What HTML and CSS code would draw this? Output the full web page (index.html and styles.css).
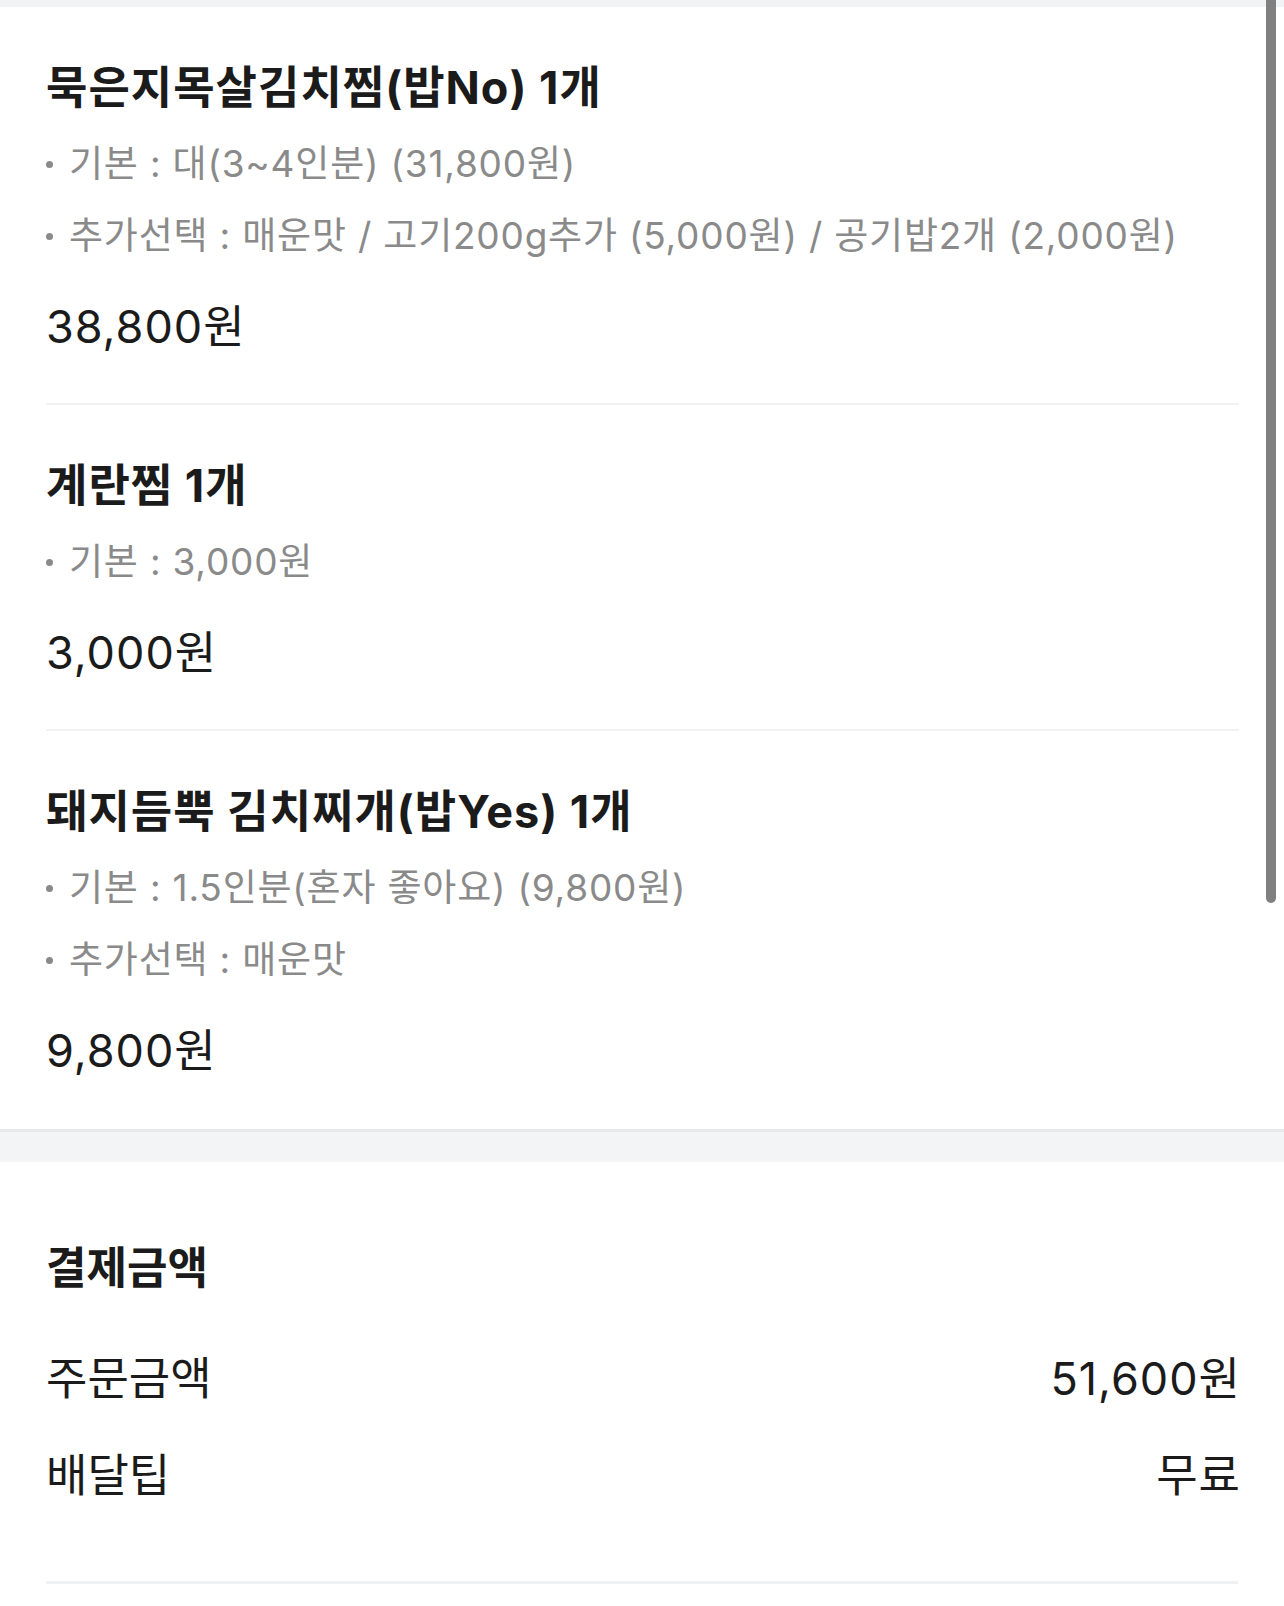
FILE: index.html
```html
<!DOCTYPE html>
<html lang="ko">
<head>
<meta charset="utf-8">
<title>주문 내역</title>
<link rel="stylesheet" href="styles.css">
</head>
<body>
<div class="page">
  <div class="top-band"></div>

  <section class="items">
    <article class="item">
      <h2 class="item-title">묵은지목살김치찜(밥No) 1개</h2>
      <ul class="opts">
        <li class="opt">기본 : 대(3~4인분) (31,800원)</li>
        <li class="opt">추가선택 : 매운맛 / 고기200g추가 (5,000원) / 공기밥2개 (2,000원)</li>
      </ul>
      <p class="item-price">38,800원</p>
    </article>

    <article class="item">
      <h2 class="item-title">계란찜 1개</h2>
      <ul class="opts">
        <li class="opt">기본 : 3,000원</li>
      </ul>
      <p class="item-price">3,000원</p>
    </article>

    <article class="item last">
      <h2 class="item-title">돼지듬뿍 김치찌개(밥Yes) 1개</h2>
      <ul class="opts">
        <li class="opt">기본 : 1.5인분(혼자 좋아요) (9,800원)</li>
        <li class="opt">추가선택 : 매운맛</li>
      </ul>
      <p class="item-price">9,800원</p>
    </article>
  </section>

  <div class="band"></div>

  <section class="summary">
    <h2 class="summary-title">결제금액</h2>
    <div class="sum-row"><span>주문금액</span><span class="sum-value">51,600원</span></div>
    <div class="sum-row"><span>배달팁</span><span class="sum-value">무료</span></div>
    <div class="sum-divider"></div>
  </section>

  <div class="scroll-indicator"></div>
</div>
</body>
</html>
```

FILE: styles.css
```css
* { box-sizing: border-box; }

html, body {
  margin: 0;
  padding: 0;
  background: #ffffff;
}

body {
  font-family: Inter, "Noto Sans CJK KR", sans-serif;
  color: #1b1b1b;
}

.page {
  position: relative;
  width: 1284px;
  min-height: 1606px;
  overflow: hidden;
}

.top-band {
  height: 7px;
  background: #f2f3f5;
}

.items {
  padding: 0 45px 2px 46px;
}

.item {
  padding: 41px 0 21px;
  border-bottom: 2px solid #f0f1f3;
}

.item.last {
  border-bottom: none;
  padding-bottom: 21px;
}

.item-title {
  margin: 0;
  font-size: 45px;
  line-height: 80px;
  font-weight: 700;
  color: #1b1b1b;
  letter-spacing: 1px;
}

.opts {
  list-style: none;
  margin: 0;
  padding: 0;
}

.opt {
  display: flex;
  align-items: center;
  font-size: 37px;
  line-height: 72px;
  color: #8a8a8a;
  letter-spacing: 0.8px;
  white-space: nowrap;
}

.opt::before {
  content: "";
  flex: none;
  width: 7px;
  height: 7px;
  border-radius: 50%;
  background: #8a8a8a;
  margin-right: 16px;
}

.item-price {
  margin: 0;
  font-size: 45px;
  line-height: 110px;
  font-weight: 400;
  color: #1b1b1b;
  letter-spacing: 1px;
}

.band {
  height: 33px;
  background: #f3f4f6;
  border-top: 3px solid #e7e8ea;
}

.summary {
  padding: 66px 44px 0 46px;
}

.summary-title {
  margin: 0 0 22px;
  font-size: 44px;
  line-height: 80px;
  font-weight: 700;
  color: #1b1b1b;
}

.sum-row {
  display: flex;
  justify-content: space-between;
  align-items: center;
  font-size: 45px;
  line-height: 97px;
  color: #1b1b1b;
}

.sum-value {
  letter-spacing: 1px;
  margin-right: -1px;
}

.sum-divider {
  margin: 57px 2px 0 0;
  height: 3px;
  background: #f0f1f3;
}

.scroll-indicator {
  position: absolute;
  top: -10px;
  right: 8px;
  width: 10px;
  height: 913px;
  border-radius: 5px;
  background: #808080;
}
```
